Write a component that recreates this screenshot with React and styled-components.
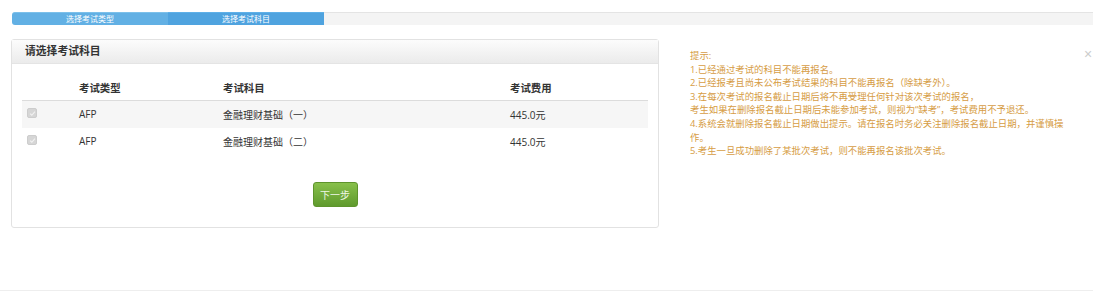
import React from 'react'
import styled, { createGlobalStyle } from 'styled-components'

const GlobalStyle = createGlobalStyle`
  html, body {
    margin: 0;
    padding: 0;
    background: #fff;
  }
  body {
    font-family: "Open Sans", "Noto Sans CJK SC", sans-serif;
    color: #333;
  }
`

const steps = [
  { label: '选择考试类型', done: true },
  { label: '选择考试科目', active: true },
]

const rows = [
  { type: 'AFP', subject: '金融理财基础（一）', fee: '445.0元' },
  { type: 'AFP', subject: '金融理财基础（二）', fee: '445.0元' },
]

const tips = [
  '提示:',
  '1.已经通过考试的科目不能再报名。',
  '2.已经报考且尚未公布考试结果的科目不能再报名（除缺考外）。',
  '3.在每次考试的报名截止日期后将不再受理任何针对该次考试的报名，',
  '考生如果在删除报名截止日期后未能参加考试，则视为“缺考”，考试费用不予退还。',
  '4.系统会就删除报名截止日期做出提示。请在报名时务必关注删除报名截止日期，并谨慎操作。',
  '5.考生一旦成功删除了某批次考试，则不能再报名该批次考试。',
]

function App() {
  return (
    <>
      <GlobalStyle />
      <Page>
        <Progress>
          {steps.map((s) => (
            <Step key={s.label} $active={s.active}>{s.label}</Step>
          ))}
          <Rest />
        </Progress>

        <Main>
          <Panel>
            <PanelHead>请选择考试科目</PanelHead>
            <Table>
              <colgroup>
                <col style={{ width: 49 }} />
                <col style={{ width: 144 }} />
                <col style={{ width: 287 }} />
                <col />
              </colgroup>
              <thead>
                <tr>
                  <Th />
                  <Th>考试类型</Th>
                  <Th>考试科目</Th>
                  <Th>考试费用</Th>
                </tr>
              </thead>
              <tbody>
                {rows.map((r, i) => (
                  <Tr key={i} $striped={i % 2 === 0}>
                    <Td>
                      <Check>
                        <svg width="7" height="7" viewBox="0 0 8 8">
                          <path d="M1.3 4.2 L3.2 6 L6.8 1.8" fill="none" stroke="#f2f2f2" strokeWidth="1.3" />
                        </svg>
                      </Check>
                    </Td>
                    <Td>{r.type}</Td>
                    <Td>{r.subject}</Td>
                    <Td>{r.fee}</Td>
                  </Tr>
                ))}
              </tbody>
            </Table>
            <Actions>
              <NextButton>下一步</NextButton>
            </Actions>
          </Panel>

          <Tips>
            {tips.map((t, i) => (
              <TipLine key={i}>{t}</TipLine>
            ))}
          </Tips>
          <Close>×</Close>
        </Main>
      </Page>
      <Footer />
    </>
  )
}

// ===============================

const Page = styled.div`
  height: 290px;
  padding-top: 12px;
  box-sizing: border-box;
`

const Progress = styled.div`
  display: flex;
  margin-left: 12px;
  height: 13px;
`

const Step = styled.div`
  width: 156px;
  flex: none;
  background: ${(p) => (p.$active ? '#4fa3df' : '#62b0e4')};
  border-top: 1px solid ${(p) => (p.$active ? '#5fb0e8' : '#7cc0ea')};
  box-sizing: border-box;
  color: #fff;
  font-size: 8px;
  line-height: 12px;
  text-align: center;
  &:first-child {
    border-radius: 3px 0 0 3px;
  }
`

const Rest = styled.div`
  flex: 1;
  background: #f4f4f4;
  border-top: 1px solid #e4e4e4;
`

const Main = styled.div`
  display: flex;
  align-items: flex-start;
  margin-top: 14px;
  padding-left: 11px;
`

const Panel = styled.div`
  width: 648px;
  flex: none;
  box-sizing: border-box;
  border: 1px solid #e2e2e2;
  border-radius: 3px;
  padding-bottom: 20px;
`

const PanelHead = styled.div`
  height: 23px;
  line-height: 22px;
  padding-left: 13px;
  background: linear-gradient(#fcfcfc, #ebebeb);
  border-bottom: 1px solid #e4e4e4;
  font-size: 10.8px;
  font-weight: bold;
  color: #333;
`

const Table = styled.table`
  width: 626px;
  margin: 11px 0 0 10px;
  border-collapse: collapse;
  table-layout: fixed;
  font-size: 10px;
`

const Th = styled.th`
  height: 25px;
  padding: 0 0 0 8px;
  text-align: left;
  font-weight: bold;
  font-size: 10.4px;
  color: #333;
  border-bottom: 1px solid #dcdcdc;
`

const Tr = styled.tr`
  background: ${(p) => (p.$striped ? '#f6f6f6' : '#fff')};
  & + & td {
    border-top: 1px solid #dcdcdc;
  }
`

const Td = styled.td`
  height: 26px;
  padding: 0 0 1px 8px;
  color: #333;
  &:first-child {
    padding-left: 5px;
  }
`

const Check = styled.span`
  display: inline-flex;
  align-items: center;
  justify-content: center;
  width: 8px;
  height: 8px;
  background: #d6d6d6;
  border: 1px solid #cdcdcd;
  border-radius: 2px;
  vertical-align: middle;
  position: relative;
  top: -2px;
`

const Actions = styled.div`
  display: flex;
  justify-content: center;
  margin-top: 27px;
`

const NextButton = styled.button`
  width: 45px;
  height: 25px;
  padding: 0;
  border: 1px solid #5e942c;
  border-radius: 3px;
  background: linear-gradient(#88c04b, #5f9a2d);
  color: #eef6e6;
  font-family: "Noto Sans CJK SC", sans-serif;
  font-size: 10px;
  cursor: pointer;
`

const Tips = styled.div`
  width: 380px;
  flex: none;
  margin-left: 31px;
  padding-top: 10px;
  font-family: "Open Sans", "Noto Sans CJK SC", sans-serif;
  font-size: 9.4px;
  line-height: 13.6px;
  color: #d69c44;
`

const TipLine = styled.div``

const Close = styled.div`
  margin-left: auto;
  padding-top: 8px;
  width: 9px;
  font-family: "Liberation Sans", sans-serif;
  font-size: 14px;
  line-height: 14px;
  color: #cccccc;
  overflow: hidden;
`

const Footer = styled.div`
  border-top: 1px solid #eeeeee;
  height: 6px;
`

export default App
